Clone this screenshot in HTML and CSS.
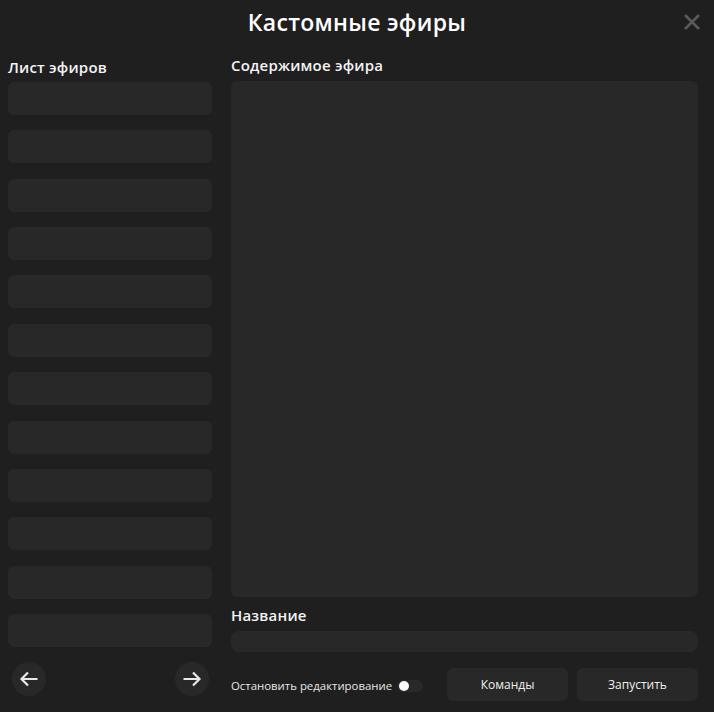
FILE: index.html
```html
<!DOCTYPE html>
<html lang="ru">
<head>
<meta charset="utf-8">
<title>Кастомные эфиры</title>
<link rel="stylesheet" href="styles.css">
</head>
<body>
<div class="app">
  <header class="top">
    <div class="spacer"></div>
    <h1 class="title">Кастомные эфиры</h1>
    <div class="close-wrap">
      <button class="close" aria-label="Закрыть">
        <svg width="18" height="18" viewBox="0 0 18 18"><path d="M2 2 L16 16 M16 2 L2 16" stroke="#5a5a5a" stroke-width="2.6" stroke-linecap="butt"/></svg>
      </button>
    </div>
  </header>
  <main class="main">
    <aside class="list-col">
      <h2 class="label label-list">Лист эфиров</h2>
      <ul class="list">
        <li class="item"></li><li class="item"></li><li class="item"></li><li class="item"></li>
        <li class="item"></li><li class="item"></li><li class="item"></li><li class="item"></li>
        <li class="item"></li><li class="item"></li><li class="item"></li><li class="item"></li>
      </ul>
      <div class="pager">
        <button class="nav" aria-label="Назад">
          <svg width="20" height="18" viewBox="0 0 20 18"><path d="M18.5 9 H2.5 M9 2.5 L2.5 9 L9 15.5" fill="none" stroke="#e8e8e8" stroke-width="2.2"/></svg>
        </button>
        <button class="nav" aria-label="Вперёд">
          <svg width="20" height="18" viewBox="0 0 20 18"><path d="M1.5 9 H17.5 M11 2.5 L17.5 9 L11 15.5" fill="none" stroke="#e8e8e8" stroke-width="2.2"/></svg>
        </button>
      </div>
    </aside>
    <section class="editor">
      <h2 class="label label-content">Содержимое эфира</h2>
      <div class="content-area"></div>
      <h2 class="label label-name">Название</h2>
      <div class="name-input"></div>
      <div class="actions">
        <div class="stop">
          <span class="stop-text">Остановить редактирование</span>
          <span class="toggle"><span class="knob"></span></span>
        </div>
        <button class="btn">Команды</button>
        <button class="btn">Запустить</button>
      </div>
    </section>
  </main>
</div>
</body>
</html>
```

FILE: styles.css
```css
* { box-sizing: border-box; }
html, body {
  margin: 0;
  padding: 0;
  background: #1f1f1f;
}
body {
  font-family: "Open Sans", "Noto Sans", sans-serif;
  color: #f2f2f2;
  width: 714px;
  height: 712px;
  overflow: hidden;
}
.app {
  display: flex;
  flex-direction: column;
  height: 712px;
}
.top {
  height: 45px;
  display: grid;
  grid-template-columns: 1fr auto 1fr;
  align-items: start;
}
.title {
  margin: 0;
  padding-top: 6px;
  font-size: 23px;
  line-height: 32px;
  font-weight: 600;
  letter-spacing: 0.3px;
  color: #ffffff;
}
.close-wrap {
  display: flex;
  justify-content: flex-end;
  padding: 13px 13px 0 0;
}
.close {
  width: 18px;
  height: 18px;
  padding: 0;
  border: 0;
  background: none;
  display: flex;
}
.main {
  display: flex;
  gap: 19px;
  padding: 0 16px 0 8px;
  flex: 1;
}
.label {
  margin: 0;
  font-size: 15px;
  line-height: 20px;
  font-weight: 600;
  color: #f4f4f4;
  letter-spacing: 0.2px;
}
.list-col {
  width: 204px;
  display: flex;
  flex-direction: column;
}
.label-list { margin-top: 12px; }
.list {
  list-style: none;
  margin: 5px 0 0;
  padding: 0;
  display: flex;
  flex-direction: column;
  gap: 15.36px;
}
.item {
  height: 33px;
  background: #282828;
  border-radius: 6px;
}
.pager {
  margin-top: 15px;
  display: flex;
  justify-content: space-between;
  padding: 0 3px 0 4px;
}
.nav {
  width: 34px;
  height: 34px;
  border-radius: 50%;
  border: 0;
  padding: 0;
  background: #282828;
  display: flex;
  align-items: center;
  justify-content: center;
}
.editor {
  flex: 1;
  display: flex;
  flex-direction: column;
}
.label-content { margin-top: 10px; }
.content-area {
  margin-top: 6px;
  height: 516px;
  background: #282828;
  border-radius: 6px;
}
.label-name { margin-top: 8px; }
.name-input {
  margin-top: 6px;
  height: 21px;
  background: #282828;
  border-radius: 8px;
}
.actions {
  margin-top: 16px;
  display: flex;
  align-items: center;
  gap: 9px;
}
.stop {
  flex: 1;
  display: flex;
  align-items: center;
  gap: 5px;
  padding-top: 2px;
}
.stop-text {
  font-size: 11.4px;
  line-height: 14px;
  color: #e6e6e6;
}
.toggle {
  width: 26px;
  height: 12px;
  border-radius: 6px;
  background: #292929;
  display: flex;
  align-items: center;
  padding-left: 2px;
}
.knob {
  width: 10px;
  height: 10px;
  border-radius: 50%;
  background: #ffffff;
}
.btn {
  width: 121px;
  height: 33px;
  border: 0;
  border-radius: 6px;
  background: #282828;
  color: #efefef;
  font-family: "Open Sans", "Noto Sans", sans-serif;
  font-size: 12px;
  font-weight: 500;
}
```
